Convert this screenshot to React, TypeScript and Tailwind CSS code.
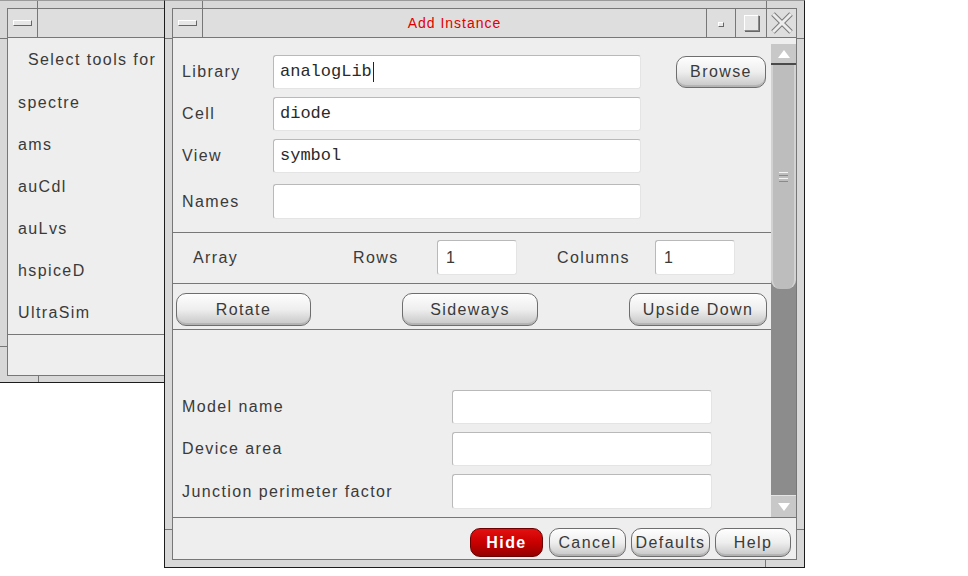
import React from "react";

function MenuButton() {
  return (
    <div className="w-[30px] h-full border-r border-[#777] flex items-center justify-center">
      <div className="w-[19px] h-[6px] bg-[#e6e6e6] border border-white border-b-[#666] border-r-[#666]" />
    </div>
  );
}

function Input({ className, children }: { className: string; children?: React.ReactNode }) {
  return (
    <div
      className={
        "bg-white border border-[#b9b9b9] border-r-[#e4e4e4] border-b-[#e4e4e4] rounded-[3px] flex items-center pl-[6px] " +
        className
      }
    >
      {children}
    </div>
  );
}

function Mono({ children }: { children: React.ReactNode }) {
  return (
    <span className="font-['Liberation_Mono',monospace] text-[17px] tracking-normal text-[#2a2a2a]">
      {children}
    </span>
  );
}

function Pill({ className, children }: { className: string; children: React.ReactNode }) {
  return (
    <button
      className={
        "flex items-center justify-center rounded-[10px] border border-[#6e6e6e] bg-linear-to-b from-[#fefefe] via-[#eeeeee] to-[#c6c6c6] shadow-[inset_0_-2px_0_rgba(0,0,0,0.10)] text-[16px] tracking-[1.4px] text-[#3a3a3a] " +
        className
      }
    >
      {children}
    </button>
  );
}

function Row({ label, children, className }: { label: string; children: React.ReactNode; className: string }) {
  return (
    <div className={"flex items-center " + className}>
      <span className="w-[91px] text-[16px] tracking-[1.4px] text-[#3a3a3a]">{label}</span>
      {children}
    </div>
  );
}

function LowerRow({ label, className }: { label: string; className: string }) {
  return (
    <div className={"flex items-center " + className}>
      <span className="w-[270px] text-[16px] tracking-[1.4px] text-[#3a3a3a]">{label}</span>
      <Input className="w-[260px] h-full" />
    </div>
  );
}

export default function App() {
  const tools = ["spectre", "ams", "auCdl", "auLvs", "hspiceD", "UltraSim"];
  return (
    <div className="relative w-[968px] h-[576px] bg-white overflow-hidden font-['Liberation_Sans',Arial,sans-serif]">
      {/* back window */}
      <div className="absolute left-0 top-0 w-[200px] h-[383px] bg-[#d8d8d8] border-t border-b border-t-[#9a9a9a] border-b-[#1c1c1c] pl-[7px] pt-[7px] pb-[6px]">
        <div className="absolute left-[37px] top-0 w-px h-[8px] bg-[#777]" />
        <div className="absolute left-[38px] bottom-0 w-px h-[7px] bg-[#777]" />
        <div className="absolute left-0 top-[37px] w-[7px] h-px bg-[#777]" />
        <div className="absolute left-0 top-[345px] w-[7px] h-px bg-[#777]" />
        <div className="h-full flex flex-col border border-[#777]">
          <div className="h-[29px] flex border-b border-[#777] bg-[#dedede]">
            <MenuButton />
            <div className="flex-1" />
          </div>
          <div className="flex-1 flex flex-col bg-[#eeeeee]">
            <div className="h-[44px] flex items-center pl-[20px] text-[16px] tracking-[1.4px] text-[#3a3a3a]">
              Select tools for
            </div>
            {tools.map((t) => (
              <div key={t} className="h-[42px] flex items-center pl-[10px] text-[16px] tracking-[1.4px] text-[#3a3a3a]">
                {t}
              </div>
            ))}
            <div className="flex-1 border-t border-[#777]" />
          </div>
        </div>
      </div>

      {/* front window */}
      <div className="absolute left-[164px] top-0 w-[641px] h-[568px] bg-[#d8d8d8] border border-t-[#9a9a9a] border-[#1c1c1c] pl-[7px] pr-[7px] pt-[7px] pb-[7px]">
        <div className="absolute left-[37px] top-0 w-px h-[8px] bg-[#777]" />
        <div className="absolute left-[601px] top-0 w-px h-[8px] bg-[#777]" />
        <div className="absolute left-[600px] bottom-0 w-px h-[7px] bg-[#777]" />
        <div className="absolute left-0 top-[37px] w-[7px] h-px bg-[#777]" />
        <div className="absolute left-0 top-[528px] w-[7px] h-px bg-[#777]" />
        <div className="absolute right-0 top-[37px] w-[7px] h-px bg-[#777]" />
        <div className="absolute right-0 top-[528px] w-[7px] h-px bg-[#777]" />
        <div className="h-full flex flex-col border border-[#777]">
          {/* title bar */}
          <div className="h-[29px] flex border-b border-[#777] bg-[#dedede]">
            <MenuButton />
            <div className="flex-1 flex items-center justify-center text-[14px] tracking-[1px] text-[#e00000]">
              Add Instance
            </div>
            <div className="w-[29px] border-l border-[#777] flex items-center justify-center pt-[3px]">
              <div className="w-[6px] h-[5px] bg-[#e8e8e8] border border-white border-b-[#666] border-r-[#666]" />
            </div>
            <div className="w-[31px] border-l border-[#777] flex items-center justify-center">
              <div className="w-[15px] h-[16px] bg-[#e6e6e6] border border-[#8a8a8a] border-l-white border-t-white shadow-[1px_1px_0_#666]" />
            </div>
            <div className="w-[30px] border-l border-[#777] flex items-center justify-center">
              <svg width="24" height="22" viewBox="0 0 24 22">
                <path d="M3 2 L21 20 M21 2 L3 20" stroke="#7a7a7a" strokeWidth="5" fill="none" />
                <path d="M3 2 L21 20 M21 2 L3 20" stroke="#ececec" strokeWidth="3" fill="none" />
              </svg>
            </div>
          </div>

          {/* body */}
          <div className="flex-1 flex flex-col bg-[#eeeeee]">
            <div className="h-[479px] flex">
              <div className="flex-1 flex flex-col">
                <div className="pt-[17px] pb-[13px] pl-[9px] border-b border-[#777]">
                  <div className="flex items-center">
                    <Row label="Library" className="h-[34px]">
                      <Input className="w-[368px] h-full">
                        <Mono>analogLib</Mono>
                        <span className="ml-[1px] w-px h-[20px] bg-[#222]" />
                      </Input>
                    </Row>
                    <Pill className="ml-[35px] w-[90px] h-[32px]">Browse</Pill>
                  </div>
                  <Row label="Cell" className="h-[34px] mt-[8px]">
                    <Input className="w-[368px] h-full">
                      <Mono>diode</Mono>
                    </Input>
                  </Row>
                  <Row label="View" className="h-[34px] mt-[8px]">
                    <Input className="w-[368px] h-full">
                      <Mono>symbol</Mono>
                    </Input>
                  </Row>
                  <Row label="Names" className="h-[35px] mt-[11px]">
                    <Input className="w-[368px] h-full" />
                  </Row>
                </div>

                <div className="pt-[7px] pb-[8px] pl-[20px] border-b border-[#777] flex items-center text-[16px] tracking-[1.4px] text-[#3a3a3a]">
                  <span className="w-[160px]">Array</span>
                  <span className="w-[84px]">Rows</span>
                  <Input className="w-[80px] h-[35px] pl-[8px]">1</Input>
                  <span className="ml-[40px] w-[98px]">Columns</span>
                  <Input className="w-[80px] h-[35px] pl-[8px]">1</Input>
                </div>

                <div className="pt-[9px] pb-[3px] pl-[3px] pr-[4px] border-b border-[#777] flex justify-between">
                  <Pill className="w-[135px] h-[33px]">Rotate</Pill>
                  <Pill className="w-[136px] h-[33px]">Sideways</Pill>
                  <Pill className="w-[138px] h-[33px]">Upside Down</Pill>
                </div>

                <div className="pt-[60px] pl-[9px]">
                  <LowerRow label="Model name" className="h-[34px]" />
                  <LowerRow label="Device area" className="h-[34px] mt-[8px]" />
                  <LowerRow label="Junction perimeter factor" className="h-[35px] mt-[8px]" />
                </div>
              </div>

              {/* scrollbar */}
              <div className="w-[25px] flex flex-col pt-[6px]">
                <div className="h-[21px] bg-[#c8c8c8] border-b-2 border-[#4a4a4a] flex items-center justify-center">
                  <svg width="12" height="8" viewBox="0 0 12 8">
                    <path d="M6 0 L12 8 L0 8 Z" fill="#ffffff" />
                  </svg>
                </div>
                <div className="flex-1 flex flex-col bg-[#8c8c8c]">
                  <div className="h-[224px] bg-[#bdbdbd] border-x-2 border-[#d2d2d2] rounded-b-[9px] flex flex-col items-center justify-center gap-[2px]">
                    <div className="w-[9px] h-px bg-[#f4f4f4]" />
                    <div className="w-[9px] h-px bg-[#8a8a8a]" />
                    <div className="w-[9px] h-px bg-[#f4f4f4]" />
                    <div className="w-[9px] h-px bg-[#8a8a8a]" />
                  </div>
                </div>
                <div className="h-[22px] bg-[#c8c8c8] border-t border-[#e4e4e4] flex items-center justify-center">
                  <svg width="12" height="8" viewBox="0 0 12 8">
                    <path d="M0 0 L12 0 L6 8 Z" fill="#ffffff" />
                  </svg>
                </div>
              </div>
            </div>

            {/* bottom buttons */}
            <div className="flex-1 border-t border-[#777] flex justify-end items-start pt-[10px] pr-[5px] gap-[5px]">
              <button className="w-[73px] h-[29px] rounded-[10px] border border-[#6a0000] bg-linear-to-b from-[#e41010] via-[#c80000] to-[#960000] text-white font-bold text-[16px] tracking-[1.4px] mr-[1px]">
                Hide
              </button>
              <Pill className="w-[77px] h-[29px]">Cancel</Pill>
              <Pill className="w-[79px] h-[29px]">Defaults</Pill>
              <Pill className="w-[76px] h-[29px]">Help</Pill>
            </div>
          </div>
        </div>
      </div>
    </div>
  );
}
